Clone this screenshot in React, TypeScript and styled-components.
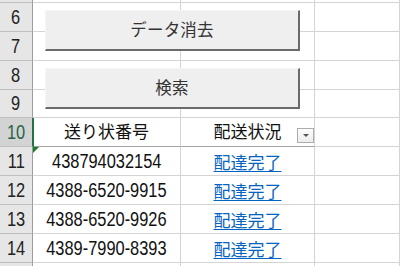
import { Fragment } from 'react';
import styled, { createGlobalStyle } from 'styled-components';

const GlobalStyle = createGlobalStyle`
  html, body {
    margin: 0;
    padding: 0;
    background: #fff;
    overflow: hidden;
  }
  body {
    font-family: "Noto Sans CJK JP", "Noto Sans", sans-serif;
  }
`;

type Row = {
  n: number;
  h: number;
  no?: string;
  status?: string;
  head?: boolean;
  flag?: boolean;
};

const rows: Row[] = [
  { n: 5, h: 3 },
  { n: 6, h: 29 },
  { n: 7, h: 29 },
  { n: 8, h: 29 },
  { n: 9, h: 28 },
  { n: 10, h: 29, head: true },
  { n: 11, h: 29, no: '438794032154', status: '配達完了', flag: true },
  { n: 12, h: 29, no: '4388-6520-9915', status: '配達完了' },
  { n: 13, h: 29, no: '4388-6520-9926', status: '配達完了' },
  { n: 14, h: 29, no: '4389-7990-8393', status: '配達完了' },
  { n: 15, h: 20 },
];

const Sheet = styled.div<{ $rows: string }>`
  position: relative;
  width: 400px;
  height: 266px;
  overflow: hidden;
  display: grid;
  grid-template-columns: 33px 148px 134px 1fr;
  grid-template-rows: ${p => p.$rows};
`;

const RowHead = styled.div<{ $active?: boolean }>`
  position: relative;
  z-index: 1;
  box-sizing: border-box;
  display: flex;
  align-items: center;
  justify-content: center;
  overflow: hidden;
  background: ${p => (p.$active ? '#d3d3d3' : '#e6e6e6')};
  border-bottom: 1px solid #bfbfbf;
  border-right: 1px solid ${p => (p.$active ? '#217346' : '#9c9c9c')};
  box-shadow: ${p => (p.$active ? '1px 0 0 #217346' : 'none')};
  color: ${p => (p.$active ? '#2a6446' : '#222')};
`;

// Excel draws its digits in a narrow face; squeeze Liberation Sans to match
const Digits = styled.span`
  display: inline-block;
  font-family: "Liberation Sans", Arial, sans-serif;
  font-size: 20px;
  transform: scaleX(0.82);
  white-space: nowrap;
`;

const Cell = styled.div<{ $head?: boolean; $flag?: boolean }>`
  position: relative;
  box-sizing: border-box;
  display: flex;
  align-items: center;
  justify-content: center;
  overflow: hidden;
  white-space: nowrap;
  border-right: 1px solid #d4d4d4;
  border-bottom: 1px solid ${p => (p.$head ? '#a3a3a3' : '#d4d4d4')};
  color: #111;
  font-size: 17px;

  &::before {
    content: '';
    display: ${p => (p.$flag ? 'block' : 'none')};
    position: absolute;
    left: 0;
    top: 0;
    border-top: 6px solid #1d7d2a;
    border-right: 6px solid transparent;
  }
`;

const HeadText = styled.span`
  margin-top: -3px;
`;

const Link = styled.a`
  color: #0563c1;
  text-decoration: underline;
  text-underline-offset: 2px;
  cursor: pointer;
`;

const FilterButton = styled.span`
  position: absolute;
  right: 0;
  top: 10px;
  width: 17px;
  height: 15px;
  box-sizing: border-box;
  display: flex;
  align-items: center;
  justify-content: center;
  border: 1px solid #adadad;
  background: linear-gradient(#fcfcfc, #ededed);

  &::after {
    content: '';
    border-left: 3px solid transparent;
    border-right: 3px solid transparent;
    border-top: 3px solid #555;
  }
`;

const Buttons = styled.div`
  position: absolute;
  left: 45px;
  top: 10px;
  width: 255px;
  display: flex;
  flex-direction: column;
  gap: 17px;
  z-index: 2;
`;

const SheetButton = styled.button`
  box-sizing: border-box;
  height: 41px;
  margin: 0;
  padding: 0 0 2px;
  background: #efefef;
  border-top: 1px solid #f6f6f6;
  border-left: 1px solid #f6f6f6;
  border-right: 2px solid #6a6a6a;
  border-bottom: 2px solid #6a6a6a;
  border-radius: 0;
  color: #333;
  font-family: "Noto Sans CJK JP", sans-serif;
  font-size: 16.5px;
  letter-spacing: 0.2px;
  cursor: pointer;
`;

export default function App() {
  return (
    <>
      <GlobalStyle />
      <Sheet $rows={rows.map(r => `${r.h}px`).join(' ')}>
        {rows.map(r => (
          <Fragment key={r.n}>
            <RowHead $active={r.head}>{r.h >= 28 && <Digits>{r.n}</Digits>}</RowHead>
            <Cell $head={r.head} $flag={r.flag}>
              {r.head && <HeadText>送り状番号</HeadText>}
              {r.no && <Digits>{r.no}</Digits>}
            </Cell>
            <Cell $head={r.head}>
              {r.head && (
                <>
                  <HeadText>配送状況</HeadText>
                  <FilterButton />
                </>
              )}
              {r.status && <Link>{r.status}</Link>}
            </Cell>
            <Cell />
          </Fragment>
        ))}
        <Buttons>
          <SheetButton>データ消去</SheetButton>
          <SheetButton>検索</SheetButton>
        </Buttons>
      </Sheet>
    </>
  );
}
